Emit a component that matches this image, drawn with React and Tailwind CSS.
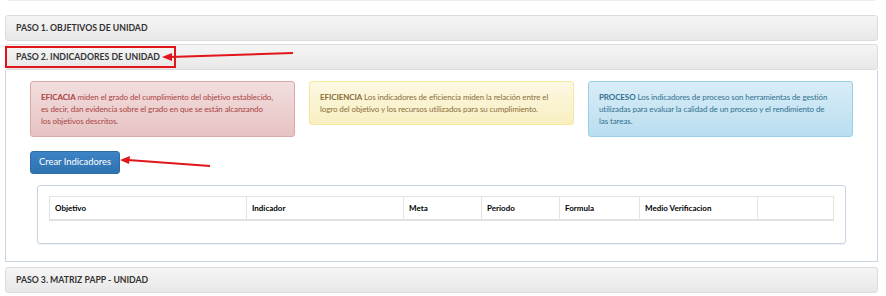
import React from 'react';

const font = { fontFamily: 'Lato, "Open Sans", Arial, sans-serif' };

function PanelHeading({ children }) {
  return (
    <div className="flex h-[26px] items-center rounded-[3px] border border-[#dcdcdc] bg-gradient-to-b from-[#f5f5f5] to-[#e8e8e8] px-[10px] text-[8.7px] font-bold uppercase text-[#333]">
      {children}
    </div>
  );
}

// lines are broken the same way the original page breaks them
const alerts = [
  {
    title: 'EFICACIA',
    lines: [
      ' miden el grado del cumplimiento del objetivo establecido,',
      'es decir, dan evidencia sobre el grado en que se están alcanzando',
      'los objetivos descritos.',
    ],
    cls: 'from-[#f2dede] to-[#e7c3c3] border-[#dca7a7] text-[#a94442]',
  },
  {
    title: 'EFICIENCIA',
    lines: [
      ' Los indicadores de eficiencia miden la relación entre el',
      'logro del objetivo y los recursos utilizados para su cumplimiento.',
    ],
    cls: 'from-[#fcf8e3] to-[#f8efc0] border-[#f5e79e] text-[#8a6d3b]',
  },
  {
    title: 'PROCESO',
    lines: [
      ' Los indicadores de proceso son herramientas de gestión',
      'utilizadas para evaluar la calidad de un proceso y el rendimiento de',
      'las tareas.',
    ],
    cls: 'from-[#d9edf7] to-[#b9def0] border-[#9acfea] text-[#31708f]',
  },
];

const columns = [
  { label: 'Objetivo', w: 'w-[197px]' },
  { label: 'Indicador', w: 'w-[157px]' },
  { label: 'Meta', w: 'w-[78px]' },
  { label: 'Periodo', w: 'w-[78px]' },
  { label: 'Formula', w: 'w-[80px]' },
  { label: 'Medio Verificacion', w: 'w-[118px]' },
  { label: '', w: 'flex-1' },
];

export default function App() {
  return (
    <div className="relative h-[296px] w-[886px] overflow-hidden bg-white" style={font}>
      <div className="flex flex-col pl-[5px] pr-[8px]">
        <div className="mx-[3px] h-px bg-[#ececec]" />
        <div className="mt-[14px]">
          <PanelHeading>Paso 1. Objetivos de Unidad</PanelHeading>
        </div>

        <div className="mt-[3px] flex flex-col">
          <PanelHeading>Paso 2. Indicadores de Unidad</PanelHeading>
          <div className="h-[192px] border border-t-0 border-[#c9d6e6] px-[24px] pt-[11px]">
            <div className="grid grid-cols-3 items-start gap-[14px]">
              {alerts.map((a) => (
                <div
                  key={a.title}
                  className={`rounded-[3px] border bg-gradient-to-b px-[10px] py-[9px] text-[8px] leading-[12px] tracking-[-0.1px] whitespace-nowrap ${a.cls}`}
                >
                  {a.lines.map((l, i) => (
                    <div key={i}>
                      {i === 0 && <b>{a.title}</b>}
                      <span>{l}</span>
                    </div>
                  ))}
                </div>
              ))}
            </div>

            <button className="mt-[14px] h-[23px] w-[90px] rounded-[3px] border border-[#2e6da4] bg-gradient-to-b from-[#3d84c6] to-[#2f72b0] text-[9.4px] text-white">
              Crear Indicadores
            </button>

            <div className="mt-[11px] ml-[7px] mr-[7px] h-[59px] rounded-[3px] border border-[#c7d3e2] px-[11px] pt-[10px] shadow-[0_1px_1px_rgba(0,0,0,0.06)]">
              <div className="flex h-[24px] border border-[#e3e3e3] shadow-[0_1px_0_#e0e0e0]">
                {columns.map((c, i) => (
                  <div
                    key={i}
                    className={`flex items-center px-[5px] text-[8px] font-bold text-black ${c.w} ${i < columns.length - 1 ? 'border-r border-[#e3e3e3]' : ''}`}
                  >
                    {c.label}
                  </div>
                ))}
              </div>
            </div>
          </div>
        </div>

        <div className="mt-[5px]">
          <PanelHeading>Paso 3. Matriz PAPP - Unidad</PanelHeading>
        </div>
      </div>

      {/* annotation box + arrows */}
      <div className="absolute left-[5px] top-[46px] h-[22px] w-[171px] border-2 border-[#e0161b]" />
      <svg className="absolute left-0 top-0" width="886" height="296">
        <line x1="293" y1="53" x2="170" y2="57" stroke="#e0161b" strokeWidth="2" />
        <polygon points="162,57 172,53 172,61" fill="#e0161b" />
        <line x1="210" y1="166" x2="128" y2="160" stroke="#e0161b" strokeWidth="2" />
        <polygon points="120,160 130,156 129,164" fill="#e0161b" />
      </svg>
    </div>
  );
}
